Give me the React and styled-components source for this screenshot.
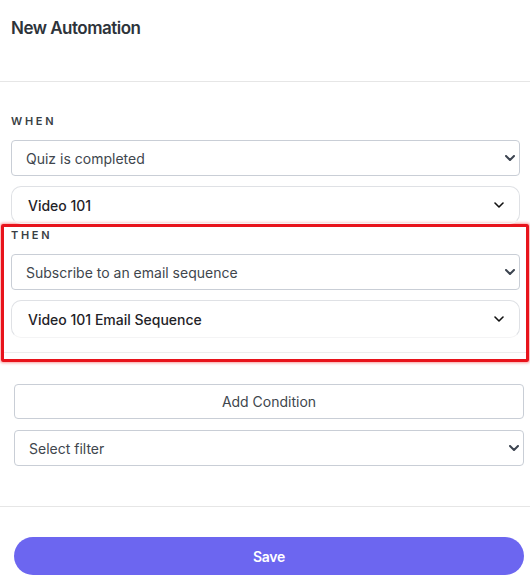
import styled, { createGlobalStyle } from "styled-components";
import { useState } from "react";

const GlobalStyle = createGlobalStyle`
  * { box-sizing: border-box; }
  body {
    margin: 0;
    background: #fff;
    font-family: Inter, "Liberation Sans", Arial, sans-serif;
    color: #333;
  }
`;

/** 화살표 아이콘 */
const Chevron = ({ dark }) => (
  <svg width="10" height="6" viewBox="0 0 10 6" fill="none">
    <path
      d="M1 1l4 4 4-4"
      stroke={dark ? "#111" : "#3c4450"}
      strokeWidth={dark ? 1.6 : 2}
      strokeLinecap="round"
      strokeLinejoin="round"
    />
  </svg>
);

const triggers = ["Quiz is completed", "Quiz is started", "Lead is captured"];
const actions = ["Subscribe to an email sequence", "Add a tag", "Send a webhook"];

const App = () => {
  const [trigger, setTrigger] = useState(triggers[0]);
  const [action, setAction] = useState(actions[0]);

  return (
    <Page>
      <GlobalStyle />
      <Header>
        <Title>New Automation</Title>
      </Header>

      <Block>
        <Label>WHEN</Label>
        <SelectWrap>
          <NativeSelect value={trigger} onChange={(e) => setTrigger(e.target.value)}>
            {triggers.map((t) => (
              <option key={t}>{t}</option>
            ))}
          </NativeSelect>
          <Arrow>
            <Chevron />
          </Arrow>
        </SelectWrap>
        <Picker>
          <span>Video 101</span>
          <Chevron dark />
        </Picker>
      </Block>

      <Highlight>
        <HighlightInner>
          <Label $tight>THEN</Label>
          <SelectWrap>
            <NativeSelect value={action} onChange={(e) => setAction(e.target.value)}>
              {actions.map((a) => (
                <option key={a}>{a}</option>
              ))}
            </NativeSelect>
            <Arrow>
              <Chevron />
            </Arrow>
          </SelectWrap>
          <Picker>
            <span>Video 101 Email Sequence</span>
            <Chevron dark />
          </Picker>
        </HighlightInner>
      </Highlight>

      <Filters>
        <OutlineButton type="button">Add Condition</OutlineButton>
        <SelectWrap>
          <NativeSelect defaultValue="">
            <option value="">Select filter</option>
          </NativeSelect>
          <Arrow>
            <Chevron />
          </Arrow>
        </SelectWrap>
      </Filters>

      <Footer>
        <SaveButton type="button">Save</SaveButton>
      </Footer>
    </Page>
  );
};

export default App;

//styled
const Page = styled.div`
  width: 530px;
  min-height: 584px;
`;

const Header = styled.header`
  height: 82px;
  padding: 16px 11px 0;
  border-bottom: 1px solid #e6e6e6;
`;

const Title = styled.h1`
  margin: 0;
  font-size: 17px;
  line-height: 24px;
  font-weight: 600;
  letter-spacing: -0.5px;
  color: #2d333a;
`;

const Block = styled.section`
  padding: 32px 10px 0 11px;
  display: flex;
  flex-direction: column;
  gap: 10px;
`;

const Label = styled.div`
  font-size: 11px;
  line-height: 14px;
  font-weight: 600;
  letter-spacing: 2.7px;
  color: #3a3f45;
  margin-bottom: ${(p) => (p.$tight ? "2px" : "2px")};
`;

const SelectWrap = styled.div`
  position: relative;
`;

const NativeSelect = styled.select`
  appearance: none;
  display: block;
  width: 100%;
  height: 36px;
  padding: 0 30px 0 14px;
  font-family: Inter, "Liberation Sans", Arial, sans-serif;
  font-size: 14px;
  color: #40464d;
  background: #fff;
  border: 1px solid #c9ced6;
  border-radius: 4px;
  outline: none;
`;

const Arrow = styled.span`
  position: absolute;
  right: 5px;
  top: 15px;
  display: flex;
  pointer-events: none;
`;

const Picker = styled.div`
  height: 38px;
  display: flex;
  align-items: center;
  justify-content: space-between;
  padding: 0 15px 0 16px;
  font-size: 14px;
  font-weight: 500;
  color: #1f2328;
  border: 1px solid #dfe1e5;
  border-bottom-color: #f4f4f5;
  border-radius: 10px;
  cursor: pointer;
`;

const Highlight = styled.section`
  margin: 0 1px;
  padding: 1px 0 6px;
  border: 3px solid #e8131b;
  border-radius: 2px;
  box-shadow: 0 0 3px 1px rgba(240, 40, 40, 0.45);
`;

const HighlightInner = styled.div`
  display: flex;
  flex-direction: column;
  gap: 10px;
  padding: 0 6px 14px 7px;
  border-bottom: 1px solid #ededed;
`;

const Filters = styled.section`
  padding: 22px 6px 40px 14px;
  display: flex;
  flex-direction: column;
  gap: 11px;
  border-bottom: 1px solid #e6e6e6;
`;

const OutlineButton = styled.button`
  height: 35px;
  width: 100%;
  font-family: Inter, "Liberation Sans", Arial, sans-serif;
  font-size: 14px;
  color: #40464d;
  background: #fff;
  border: 1px solid #c9ced6;
  border-radius: 4px;
  cursor: pointer;
`;

const Footer = styled.footer`
  padding: 30px 6px 0 14px;
`;

const SaveButton = styled.button`
  width: 100%;
  height: 38px;
  border: 0;
  border-radius: 19px;
  background: #6c66f0;
  color: #fff;
  font-family: Inter, "Liberation Sans", Arial, sans-serif;
  font-size: 14px;
  font-weight: 600;
  letter-spacing: -0.3px;
  cursor: pointer;
`;
